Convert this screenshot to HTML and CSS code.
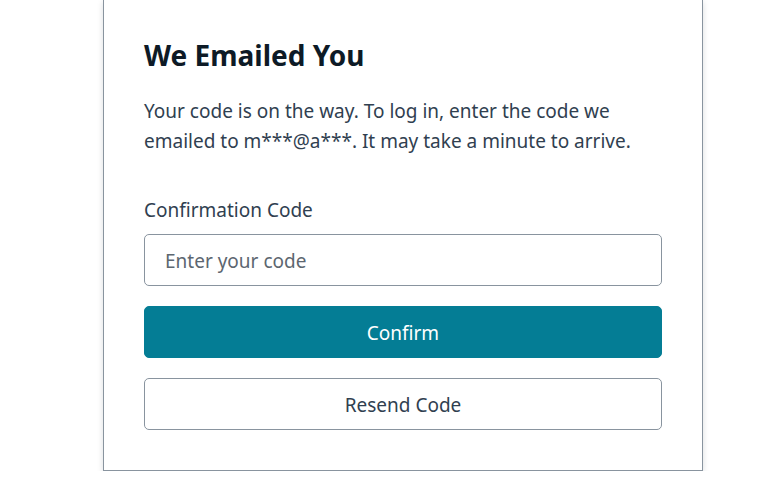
FILE: index.html
```html
<!DOCTYPE html>
<html lang="en">
<head>
<meta charset="utf-8">
<title>We Emailed You</title>
<link rel="stylesheet" href="styles.css">
</head>
<body>
  <main class="page">
    <form class="card" onsubmit="return false">
      <h3 class="title">We Emailed You</h3>
      <p class="desc">Your code is on the way. To log in, enter the code we emailed to m***@a***. It may take a minute to arrive.</p>
      <div class="field">
        <label class="label" for="code">Confirmation Code</label>
        <input class="input" id="code" type="text" placeholder="Enter your code">
      </div>
      <button class="btn btn-primary" type="submit">Confirm</button>
      <button class="btn btn-secondary" type="button">Resend Code</button>
    </form>
  </main>
</body>
</html>
```

FILE: styles.css
```css
html, body {
  margin: 0;
  padding: 0;
  background: #ffffff;
}

body {
  font-family: "Noto Sans", "Open Sans", sans-serif;
  color: #304050;
}

.page {
  display: flex;
  padding-left: 103px;
}

.card {
  box-sizing: border-box;
  width: 600px;
  display: flex;
  flex-direction: column;
  padding: 38px 40px 40px;
  border: 1px solid #89949f;
  border-top: none;
  background: #ffffff;
  box-shadow: 0 2px 6px rgba(13, 26, 38, 0.15);
}

.title {
  margin: 0;
  font-size: 28px;
  line-height: 35px;
  font-weight: 700;
  color: #0d1a26;
}

.desc {
  margin: 23px 0 0;
  font-size: 19px;
  line-height: 30px;
  color: #304050;
}

.field {
  margin-top: 39px;
  display: flex;
  flex-direction: column;
  gap: 9px;
}

.label {
  font-size: 19px;
  line-height: 30px;
  color: #304050;
}

.input {
  box-sizing: border-box;
  height: 52px;
  padding: 2px 20px 0;
  border: 1px solid #89949f;
  border-radius: 5px;
  font-family: inherit;
  font-size: 19px;
  color: #0d1a26;
  background: #ffffff;
  outline: none;
}

.input::placeholder {
  color: #5c6670;
}

.btn {
  box-sizing: border-box;
  height: 52px;
  margin-top: 20px;
  padding: 2px 0 0;
  border-radius: 5px;
  font-family: inherit;
  font-size: 19px;
  cursor: pointer;
}

.btn-primary {
  background: #047d95;
  border: 1px solid #047d95;
  color: #ffffff;
}

.btn-secondary {
  background: #ffffff;
  border: 1px solid #89949f;
  color: #304050;
}
```
